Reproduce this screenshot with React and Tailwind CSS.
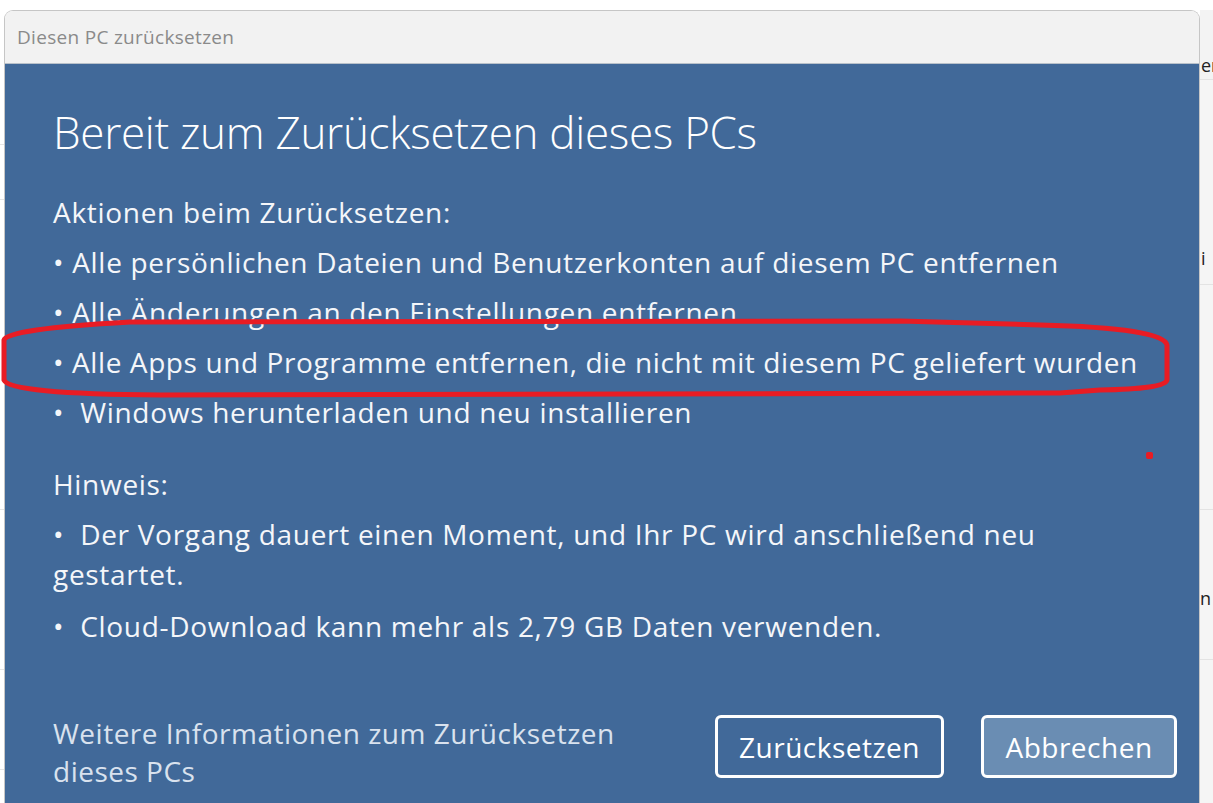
export default function App() {
  const font = { fontFamily: "'Open Sans', 'Noto Sans', sans-serif" };
  return (
    <div className="relative w-[1213px] h-[803px] overflow-hidden bg-white flex" style={font}>
      {/* left background strip */}
      <div className="w-[4px] h-full bg-white flex flex-col shrink-0">
        <div className="h-[145px] border-b border-[#e5e5e5]"></div>
        <div className="h-[55px] border-b border-[#e5e5e5]"></div>
        <div className="h-[310px] border-b border-[#e5e5e5]"></div>
        <div className="h-[160px] border-b border-[#e5e5e5]"></div>
        <div className="h-[100px] border-b border-[#e5e5e5]"></div>
      </div>

      {/* dialog */}
      <div className="w-[1196px] shrink-0 pt-[10px] flex flex-col">
        <div className="flex-1 flex flex-col rounded-t-[9px] border border-b-0 border-[#c6c6c6] overflow-hidden">
          <div className="h-[53px] shrink-0 bg-[#f2f2f2] border-b border-[#b9c1ca] flex items-center px-[12px] text-[19px] tracking-[0.3px] text-[#8a8a8a]">
            Diesen PC zurücksetzen
          </div>
          <div className="flex-1 bg-[#416999] text-white pl-[48px] pr-[22px] pt-[40px] flex flex-col">
            <h1 className="text-[44px] font-light leading-[56px] tracking-[-0.3px]">Bereit zum Zurücksetzen dieses PCs</h1>
            <div className="mt-[32px] text-[28px] leading-[40px] tracking-[0.7px] text-[#f4f6f9]">
              <p>Aktionen beim Zurücksetzen:</p>
              <p className="mt-[10px]">• Alle persönlichen Dateien und Benutzerkonten auf diesem PC entfernen</p>
              <p className="mt-[10px]">• Alle Änderungen an den Einstellungen entfernen</p>
              <p className="mt-[10px] tracking-[0.6px]">• Alle Apps und Programme entfernen, die nicht mit diesem PC geliefert wurden</p>
              <p className="mt-[10px]">•&nbsp; Windows herunterladen und neu installieren</p>
              <p className="mt-[32px]">Hinweis:</p>
              <p className="mt-[10px] pr-[60px]">•&nbsp; Der Vorgang dauert einen Moment, und Ihr PC wird anschließend neu gestartet.</p>
              <p className="mt-[12px]">•&nbsp; Cloud-Download kann mehr als 2,79 GB Daten verwenden.</p>
            </div>
            <div className="mt-[68px] flex items-start justify-between">
              <p className="w-[590px] text-[28px] leading-[38px] tracking-[0.5px] text-[#d9e2ee]">Weitere Informationen zum Zurücksetzen dieses PCs</p>
              <div className="flex gap-[37px] pt-[1px]">
                <button className="w-[229px] h-[63px] rounded-[6px] border-[3px] border-white text-[28px] tracking-[0.5px] text-white bg-transparent">Zurücksetzen</button>
                <button className="w-[196px] h-[63px] rounded-[6px] border-[3px] border-white text-[28px] tracking-[0.5px] text-white bg-[#6a8db3]">Abbrechen</button>
              </div>
            </div>
          </div>
        </div>
      </div>

      {/* right background strip */}
      <div className="w-[13px] shrink-0 h-full flex flex-col bg-white">
        <div className="h-[10px] bg-white"></div>
        <div className="h-[70px] bg-[#f3f3f3] border-b border-[#e3e3e3] text-[18px] leading-[110px] text-[#222] overflow-hidden pl-[1px]">er</div>
        <div className="h-[205px] bg-[#f5f5f5] border-b border-[#e3e3e3] text-[18px] text-[#222] overflow-hidden pt-[165px] pl-[1px]">i</div>
        <div className="h-[225px] bg-[#f5f5f5] border-b border-[#e3e3e3]"></div>
        <div className="h-[150px] bg-[#f5f5f5] border-b border-[#e3e3e3] text-[18px] text-[#222] overflow-hidden pt-[75px]">n</div>
        <div className="flex-1 bg-[#f5f5f5]"></div>
      </div>

      {/* red annotation overlay */}
      <svg className="absolute left-0 top-0 pointer-events-none" width="1213" height="803" viewBox="0 0 1213 803">
        <path
          d="M130 322 L900 321 L1040 325 Q1163 328 1167 345 L1167 380 Q1165 389 1100 390 L1060 393 L160 395 Q10 394 4 380 L4 340 Q6 329 130 322 Z"
          fill="none"
          stroke="#e81c24"
          strokeWidth="5"
          strokeLinejoin="round"
        />
        <rect x="1146" y="452" width="7" height="7" rx="2" fill="#e81c24" />
      </svg>
    </div>
  );
}
